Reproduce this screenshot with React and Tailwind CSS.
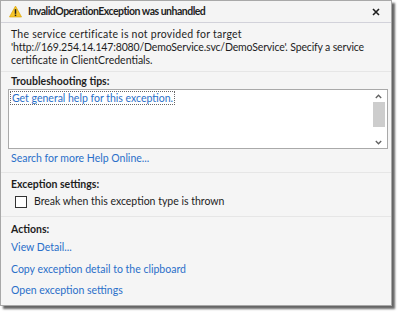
export default function App() {
  const font = { fontFamily: 'Lato, "Open Sans", sans-serif' };
  const link = "text-[#2a6fc9]";
  return (
    <div className="w-[399px] h-[313px] bg-white" style={font}>
      <div className="w-[392px] h-[306px] bg-[#f5f5f5] border border-[#a8a8a8] shadow-[3px_3px_2px_rgba(0,0,0,0.6)] flex flex-col text-[10.5px] text-[#1e1e1e] leading-[13px] overflow-hidden">
        <div className="h-[22px] shrink-0 bg-[#f4f4f4] border-b border-[#d2d2da] flex items-center pl-[8px] pr-[11px]">
          <svg width="13" height="13" viewBox="0 0 14 13" className="shrink-0">
            <path d="M7 0.6 L13.5 12.4 L0.5 12.4 Z" fill="#f7c52a" stroke="#d8a300" strokeWidth="0.7" strokeLinejoin="round" />
            <rect x="6.2" y="4" width="1.6" height="5" fill="#1e1e1e" />
            <rect x="6.2" y="9.8" width="1.6" height="1.6" fill="#1e1e1e" />
          </svg>
          <span className="ml-[6px] font-bold text-[10.5px] tracking-[-0.5px] whitespace-nowrap">InvalidOperationException was unhandled</span>
          <svg width="8" height="8" viewBox="0 0 8 8" className="ml-auto">
            <path d="M1 1 L7 7 M7 1 L1 7" stroke="#1e1e1e" strokeWidth="1.6" />
          </svg>
        </div>
        <div className="shrink-0 px-[10px] pt-[5px] pb-[4px] border-b border-[#e6e6e6] whitespace-nowrap">
          <div className="tracking-[0.25px]">The service certificate is not provided for target</div>
          <div className="tracking-[-0.15px]">'http://169.254.14.147:8080/DemoService.svc/DemoService'. Specify a service</div>
          <div>certificate in ClientCredentials.</div>
        </div>
        <div className="shrink-0 px-[10px] pt-[3px] pb-[7px] border-b border-[#e6e6e6]">
          <div className="font-bold">Troubleshooting tips:</div>
          <div className="mt-[1px] -ml-[3px] -mr-[7px] h-[60px] bg-white border border-[#a9a9a9] flex">
            <div className="flex-1 pl-[1px] pt-[2px]">
              <span className={`${link} border border-dotted border-[#666] px-[1px]`}>Get general help for this exception.</span>
            </div>
            <div className="w-[15px] mr-[1px] flex flex-col items-center pt-[4px] pb-[3px]">
              <svg width="7" height="5" viewBox="0 0 7 5"><path d="M0.8 4 L3.5 1.2 L6.2 4" stroke="#606060" strokeWidth="1.3" fill="none" /></svg>
              <div className="mt-[3px] w-[12px] h-[25px] bg-[#cdcdcd]" />
              <div className="flex-1" />
              <svg width="7" height="5" viewBox="0 0 7 5"><path d="M0.8 1 L3.5 3.8 L6.2 1" stroke="#606060" strokeWidth="1.3" fill="none" /></svg>
            </div>
          </div>
          <div className={`mt-[3px] ${link}`}>Search for more Help Online...</div>
        </div>
        <div className="shrink-0 px-[10px] pt-[5px] pb-[8px] border-b border-[#e6e6e6]">
          <div className="font-bold">Exception settings:</div>
          <div className="mt-[4px] flex items-center pl-[4px] h-[13px]">
            <div className="w-[12px] h-[12px] border border-[#333] bg-white shrink-0" />
            <span className="ml-[7px]">Break when this exception type is thrown</span>
          </div>
        </div>
        <div className="px-[10px] pt-[6px] flex flex-col">
          <div className="font-bold">Actions:</div>
          <div className={`mt-[5px] ${link}`}>View Detail...</div>
          <div className={`mt-[9px] ${link}`}>Copy exception detail to the clipboard</div>
          <div className={`mt-[8px] ${link}`}>Open exception settings</div>
        </div>
      </div>
    </div>
  );
}
